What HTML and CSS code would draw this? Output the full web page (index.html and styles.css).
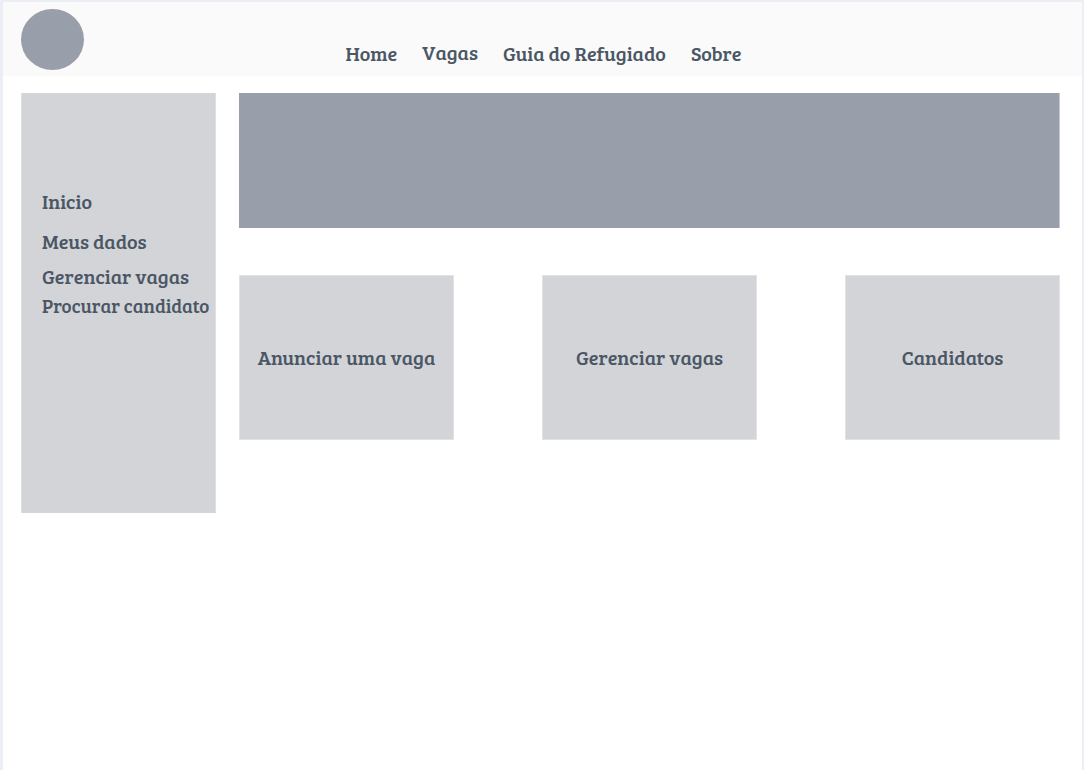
FILE: index.html
```html
<!DOCTYPE html>
<html lang="pt-BR">
<head>
<meta charset="utf-8">
<meta name="viewport" content="width=device-width, initial-scale=1">
<title>Vagas</title>
<link rel="stylesheet" href="styles.css">
</head>
<body>
<div class="page">
  <header class="header">
    <div class="logo"></div>
    <nav class="nav">
      <a href="#">Home</a>
      <a href="#" class="nav-raised">Vagas</a>
      <a href="#">Guia do Refugiado</a>
      <a href="#">Sobre</a>
    </nav>
  </header>
  <div class="content">
    <aside class="sidebar">
      <a href="#" class="side-first">Inicio</a>
      <a href="#" class="side-second">Meus dados</a>
      <a href="#">Gerenciar vagas</a>
      <a href="#" class="side-small">Procurar candidato</a>
    </aside>
    <main class="main">
      <section class="banner"></section>
      <section class="cards">
        <a href="#" class="card">Anunciar uma vaga</a>
        <a href="#" class="card">Gerenciar vagas</a>
        <a href="#" class="card">Candidatos</a>
      </section>
    </main>
  </div>
</div>
</body>
</html>
```
FILE: styles.css
```css
* {
  box-sizing: border-box;
}

body {
  margin: 0;
  background: #ebeef5;
  color: #4b5765;
  font-family: "Bree Serif", "DejaVu Serif Condensed", "DejaVu Serif", serif;
  font-size: 20px;
  line-height: 24px;
}

a {
  color: inherit;
  text-decoration: none;
  white-space: nowrap;
}

.page {
  min-height: 100vh;
  border: solid #ebeef5;
  border-width: 2px 2px 0 3px;
  background: #fff;
}

.header {
  display: grid;
  grid-template-columns: 63px 1fr 61px;
  align-items: center;
  padding: 7px 18px 6px;
  background: #fafafa;
}

.logo {
  height: 61px;
  border-radius: 50%;
  background: #989eaa;
}

.nav {
  display: flex;
  align-self: end;
  justify-content: center;
  gap: 25px;
  padding-bottom: 5px;
}

.nav-raised {
  margin-top: -1px;
}

.content {
  display: grid;
  grid-template-columns: 195px 1fr;
  align-items: start;
  gap: 23px;
  padding: 17px 22px 24px 18px;
}

.sidebar {
  display: flex;
  flex-direction: column;
  gap: 6px;
  min-height: 420px;
  padding: 96px 0 24px 20px;
  border: solid #dfe0e3;
  border-width: 0 1px;
  background: #d3d4d8;
}

.side-first {
  margin-bottom: 10px;
}

.side-second {
  margin-bottom: 5px;
}

.side-small {
  font-size: 19px;
}

.banner {
  height: 135px;
  border-right: 1px solid #c4c8cf;
  background: #989eaa;
}

.cards {
  display: grid;
  grid-template-columns: repeat(3, 1fr);
  gap: 88px;
  margin-top: 47px;
}

.card {
  display: flex;
  align-items: center;
  justify-content: center;
  height: 165px;
  padding-bottom: 2px;
  border: 1px solid #e2e3e5;
  background: #d3d4d8;
}
```
